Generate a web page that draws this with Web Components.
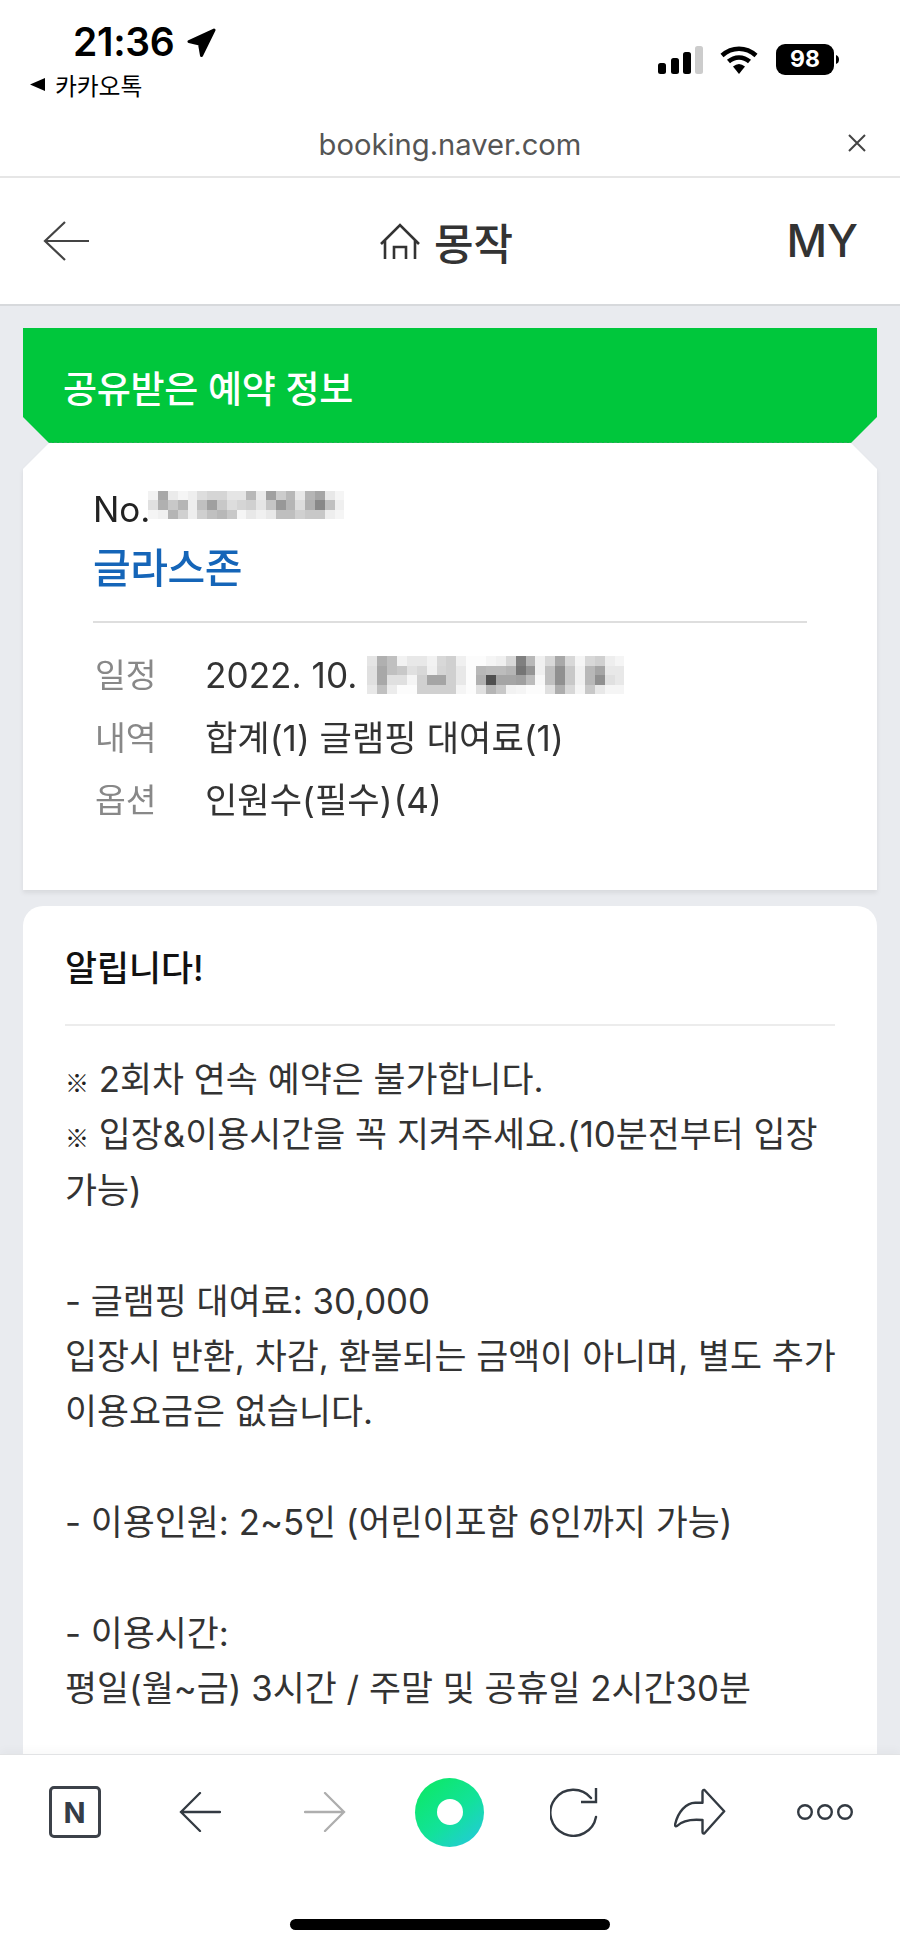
<!DOCTYPE html>
<html lang="ko"><head><meta charset="utf-8"><title>공유받은 예약 정보</title>
<style>
html,body{margin:0;padding:0;background:#fff}
body{width:900px;height:1948px;overflow:hidden;font-family:Inter,"Noto Sans CJK KR",sans-serif;color:#333}
.ref{font:700 24px/1 "Noto Sans CJK KR",sans-serif;color:#222}
.tight{letter-spacing:-9px}
</style></head>
<body>
<app-shell>
  <status-bar slot="top"></status-bar>
  <url-bar slot="top" url="booking.naver.com"></url-bar>
  <site-header slot="top" title="몽작"></site-header>
  <share-banner>공유받은 예약 정보</share-banner>
  <booking-card>
    <info-row label="일정">2022. 10. <mosaic-blur variant="date"></mosaic-blur></info-row>
    <info-row label="내역">합계(1) 글램핑 대여료(1)</info-row>
    <info-row label="옵션">인원수(필수)<span class="tight"> </span>(4)</info-row>
  </booking-card>
  <notice-card heading="알립니다!"><span class="ref">※</span> 2회차 연속 예약은 불가합니다.<br><span class="ref">※</span> 입장&amp;이용시간을 꼭 지켜주세요.(10분전부터 입장<br>가능)<br><br>- 글램핑 대여료: 30,000<br>입장시 반환, 차감, 환불되는 금액이 아니며, 별도 추가<br>이용요금은 없습니다.<br><br>- 이용인원: 2~5인 (어린이포함 6인까지 가능)<br><br>- 이용시간:<br>평일(월~금) 3시간 / 주말 및 공휴일 2시간30분<br><br></notice-card>
  <browser-toolbar slot="bottom"></browser-toolbar>
</app-shell>
<script>
function def(name, css, html, init){
  customElements.define(name, class extends HTMLElement{
    constructor(){super();const r=this.attachShadow({mode:'open'});
      r.innerHTML='<style>'+css+'</style>'+(typeof html==='function'?html(this):html);}
    connectedCallback(){
      const r=this.shadowRoot;
      r.querySelectorAll('[data-attr]').forEach(n=>{n.textContent=this.getAttribute(n.dataset.attr)||''});
      if(init)init(this,r);
    }
  });
}
const KR='Inter,"Noto Sans CJK KR",sans-serif';
def('app-shell',`
:host{display:flex;flex-direction:column;width:900px;height:1948px;background:#e9ebef;overflow:hidden}
.top{flex:none;display:block;position:relative;z-index:2}
.main{flex:1;min-height:0;overflow:hidden;padding:22px 23px 0;display:flex;flex-direction:column}
.bottom{flex:none;position:relative;z-index:2}
`,`<div class="top"><slot name="top"></slot></div><div class="main"><slot></slot></div><div class="bottom"><slot name="bottom"></slot></div>`);

def('status-bar',`
:host{display:flex;justify-content:space-between;height:122px;background:#fff;color:#000}
.left{padding:20px 0 0 30px}
.time{display:flex;align-items:center;margin-left:43px;height:44px;font:600 39px/44px Inter,sans-serif;letter-spacing:-.3px}
.time svg{margin-left:11px;margin-top:2px}
.back{display:flex;align-items:center;margin-top:-1px;height:43px;font:400 23.8px/30px "Noto Sans CJK KR",sans-serif;letter-spacing:-.1px}
.back svg{margin-right:10px}
.right{display:flex;align-items:flex-start;padding:44px 61px 0 0}
.sig{margin-top:2px}.wifi{margin:2px 0 0 17px}
.bat{display:flex;align-items:center;margin-left:18px}
.pill{width:58px;height:31px;border-radius:9px;background:#000;color:#fff;font:700 23px/31px Inter,sans-serif;text-align:center}
.bat svg{margin-left:2px}
`,`<div class="left"><div class="time"><span>21:36</span>
<svg width="30" height="30" viewBox="0 0 30 30"><path d="M28 2 3 13.5 13.5 16 15.5 27.5Z" fill="#000" stroke="#000" stroke-width="3" stroke-linejoin="round"/></svg></div>
<div class="back"><svg width="15" height="13" viewBox="0 0 15 13"><path d="M15 0V13L0 6.500Z" fill="#000"/></svg><span>카카오톡</span></div></div>
<div class="right">
<svg class="sig" width="45" height="28" viewBox="0 0 45 28"><rect x="0" y="17" width="8" height="11" rx="2.500"/><rect x="13" y="12" width="8" height="16" rx="2.500"/><rect x="25" y="6" width="8" height="22" rx="2.500"/><rect x="37" y="0" width="8" height="28" rx="2.500" fill="#ccc"/></svg>
<svg class="wifi" width="38" height="28" viewBox="0 0 38 28"><path d="M2 9.500C12 .5 26 .5 36 9.500" fill="none" stroke="#000" stroke-width="4.500"/><path d="M8.500 15.500C14.500 10 23.500 10 29.500 15.500" fill="none" stroke="#000" stroke-width="4.500"/><path d="M13 20.500Q19 15.500 25 20.500L19 28Z" fill="#000"/></svg>
<div class="bat"><div class="pill">98</div><svg width="3" height="9" viewBox="0 0 3 9"><path d="M0 0Q3 1 3 4.500T0 9Z"/></svg></div>
</div>`);

def('url-bar',`
:host{display:flex;align-items:flex-start;justify-content:center;position:relative;height:54px;background:#fff;border-bottom:2px solid #e6e6e6;font:400 29.2px/40px Inter,sans-serif;color:#555;box-sizing:content-box}
span{margin-top:3px}
svg{position:absolute;right:33px;top:11px}
`,`<span data-attr="url"></span><svg width="20" height="20" viewBox="0 0 20 20"><path d="M2 2 18 18M18 2 2 18" stroke="#444" stroke-width="2" fill="none"/></svg>`);

def('site-header',`
:host{display:flex;align-items:center;justify-content:space-between;height:126px;padding:0 42px 0 43px;background:#fff;border-bottom:2px solid #d7d9dc;position:relative}
.c{position:absolute;left:380px;top:0;height:126px;display:flex;align-items:center}
.t{font:500 43px/50px "Noto Sans CJK KR",sans-serif;color:#333;margin-left:14px}
.my{font:500 44.500px/54px Inter,sans-serif;color:#333}
`,`<svg width="46" height="40" viewBox="0 0 46 40"><path d="M22 1 2 20 22 39M2 20H46" fill="none" stroke="#444" stroke-width="2.200"/></svg>
<div class="c"><svg width="40" height="36" viewBox="0 0 40 36"><path d="M1 21 20 2 39 21M5 36V17M35 36V17M14 36V24H26V36" fill="none" stroke="#333" stroke-width="2.600"/></svg><span class="t" data-attr="title"></span></div>
<span class="my">MY</span>`);

def('share-banner',`
:host{display:block;flex:none;height:115px;box-sizing:border-box;padding:35px 40px 0;background:#00c73c;color:#fff;font:500 37px/48px "Noto Sans CJK KR",sans-serif;letter-spacing:-.3px;clip-path:polygon(0 0,100% 0,100% 89px,calc(100% - 26px) 100%,26px 100%,0 89px);position:relative}
:host::after{content:"";position:absolute;left:26px;right:26px;bottom:0;height:1px;background:repeating-linear-gradient(90deg,#2fae5a 0 3px,#00c73c 3px 5px)}
`,`<slot></slot>`);

def('mosaic-blur',`
:host{display:inline-block;vertical-align:top;position:relative}
.g{display:grid;filter:blur(.5px)}
.g i{display:block}
`,`<div class="g"></div>`,(el,r)=>{
  const sets={
    no:{w:9.8,h:9.4,rows:[
      'f2 a8 eb f5 ee dd d5 d5 e5 e5 b8 ea a0 cc b8 e8 b5 a5 e8 f5',
      'e0 b0 c8 b5 ee c0 a0 c8 dd d5 d0 e5 c5 98 b5 dd b0 88 c0 ef',
      'f5 f0 b5 d0 ee cf c0 b8 c8 f5 e8 f0 e8 bf bf d0 c8 c8 ee f5']},
    date:{w:9.9,h:9.4,rows:[
      'e5 b0 c0 f2 e8 e8 f2 d8 d0 f0 fc fc f5 f0 d8 80 b8 f0 d8 a8 d8 f5 d8 d0 ee f5',
      'e0 a8 c0 c8 e0 d8 f0 d5 d0 e8 fc b8 bc bc b5 75 95 f0 c0 90 c8 f0 b8 a5 e8 e8',
      'e0 a8 e0 e0 f5 d0 a5 a5 d0 e8 fc b0 50 a5 a5 a0 bc f8 c0 90 c8 f0 b8 90 e0 e8',
      'e8 c0 ec fc fc d0 d0 d0 d0 f5 fc e0 b5 c8 f2 f5 fc fc e0 ad d8 f5 c8 e8 f5 f5']}
  };
  const s=sets[el.getAttribute('variant')], g=r.querySelector('.g');
  g.style.gridTemplateColumns='repeat('+s.rows[0].split(' ').length+','+s.w+'px)';
  g.style.gridAutoRows=s.h+'px';
  s.rows.forEach(row=>row.split(' ').forEach(v=>{const i=document.createElement('i');i.style.background='#'+v+v+v;g.appendChild(i)}));
});

def('booking-card',`
:host{display:block;flex:none;height:447px;box-sizing:border-box;filter:drop-shadow(0 3px 2px rgba(0,0,0,.07))}
.card{height:100%;box-sizing:border-box;background:#fff;padding:43px 70px 0;clip-path:polygon(26px 0,calc(100% - 26px) 0,100% 26px,100% 100%,0 100%,0 26px)}
.no{display:flex;font:400 35px/46px Inter,sans-serif;color:#222;height:46px}
.no mosaic-blur{margin:5px 0 0 -2px}
.name{font:500 41px/58px "Noto Sans CJK KR",sans-serif;color:#1565b8;margin-top:4px;letter-spacing:-.5px}
.line{height:2px;background:#dedede;margin:27px 0 0 0;}
.rows{padding-top:21px}
`,`<div class="card"><div class="no"><span>No.</span><mosaic-blur variant="no"></mosaic-blur></div>
<div class="name">글라스존</div><div class="line"></div><div class="rows"><slot></slot></div></div>`);

def('info-row',`
:host{display:flex;height:62.500px;align-items:center;font:400 35.200px/50px ${KR};color:#333}
.l{width:112px;padding-left:2px;box-sizing:border-box;color:#888;flex:none;font-size:33.500px}
.v{display:flex;white-space:pre;align-items:center}
`,`<span class="l" data-attr="label"></span><span class="v"><slot></slot></span>`);

def('notice-card',`
:host{display:block;flex:none;margin-top:16px;background:#fff;border-radius:20px 20px 0 0;padding:0 42px;min-height:900px;font-family:${KR}}
.h{height:120px;box-sizing:border-box;padding-top:37px;font:500 34.800px/50px Inter,"Noto Sans CJK KR",sans-serif;color:#111;border-bottom:2px solid #ececec}
.b{padding-top:26px;font-size:34.800px;line-height:55.400px;color:#333;white-space:nowrap}
`,`<div class="h" data-attr="heading"></div><div class="b"><slot></slot></div>`);

def('browser-toolbar',`
:host{display:block;height:194px;background:#fff;border-top:1px solid #e2e3e5;box-sizing:border-box;box-shadow:0 -5px 8px rgba(0,0,0,.025)}
.row{display:grid;grid-template-columns:repeat(7,125px);padding:0 12px;height:114px;align-items:center;justify-items:center}
.n{width:52px;height:52px;box-sizing:border-box;border:3px solid #3c4149;border-radius:5px;display:flex;align-items:center;justify-content:center;font:700 29px/1 Inter,sans-serif;color:#353c47}
.o{width:69px;height:69px;border-radius:50%;background:linear-gradient(140deg,#0de868 10%,#12e29a 55%,#24c9dc 95%);display:flex;align-items:center;justify-content:center}
.o::after{content:"";width:26px;height:26px;border-radius:50%;background:#fff}
.bar{width:320px;height:11px;border-radius:6px;background:#000;margin:50px auto 0}
`,`<div class="row">
<div class="n">N</div>
<svg width="42" height="40" viewBox="0 0 42 40"><path d="M21 1 2 20 21 39M2 20H41" fill="none" stroke="#333a42" stroke-width="2.300" stroke-linecap="round"/></svg>
<svg width="42" height="40" viewBox="0 0 42 40"><path d="M21 1 40 20 21 39M40 20H1" fill="none" stroke="#aeaeae" stroke-width="2.300" stroke-linecap="round"/></svg>
<div class="o"></div>
<svg width="50" height="50" viewBox="0 0 50 50"><path d="M41 11A23 23 0 1 0 46 30" fill="none" stroke="#333a42" stroke-width="2.400" stroke-linecap="round"/><path d="M31 15H46V1" fill="none" stroke="#333a42" stroke-width="2.400"/></svg>
<svg width="52" height="48" viewBox="0 0 52 48"><path d="M30.500 2 50.200 23.300 30.500 45.300Q28.500 46 28.500 43.700V32C18 31 8 33 3 38 .5 39 1.200 36 1.200 36 4 24 12 14.700 21.200 14.700H28.500V4Q28.500 1.500 30.500 2Z" fill="none" stroke="#333a42" stroke-width="2.400" stroke-linejoin="round"/></svg>
<svg width="56" height="18" viewBox="0 0 56 18"><g fill="none" stroke="#333a42" stroke-width="2.400"><circle cx="8" cy="9" r="6.800"/><circle cx="28" cy="9" r="6.800"/><circle cx="48" cy="9" r="6.800"/></g></svg>
</div><div class="bar"></div>`);
</script>
</body></html>
